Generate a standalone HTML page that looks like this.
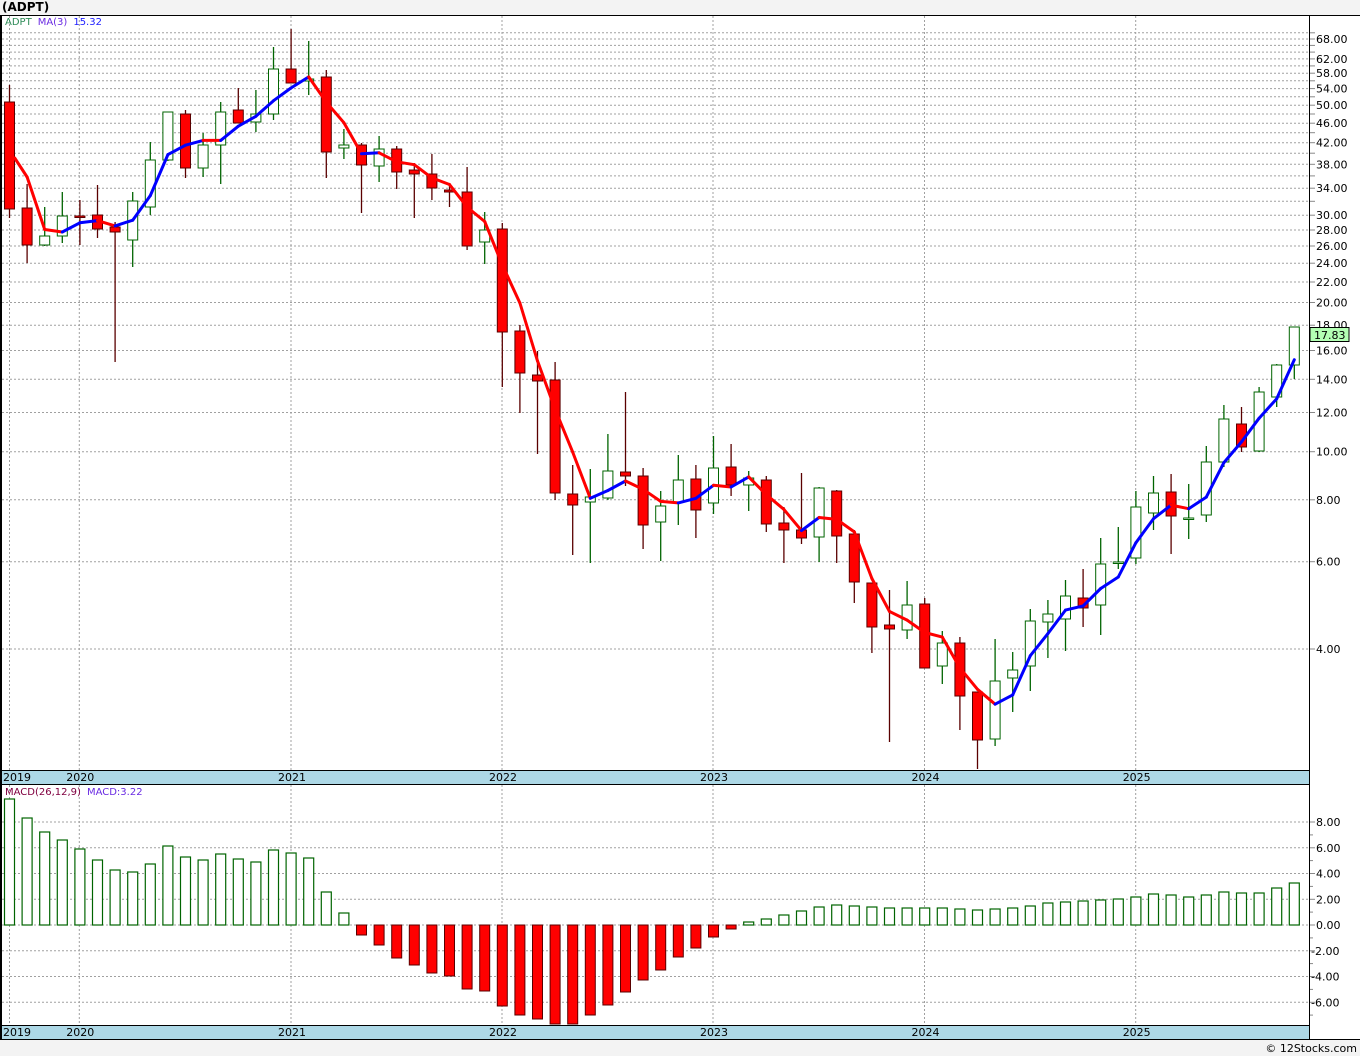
<!DOCTYPE html>
<html><head><meta charset="utf-8"><style>
html,body{margin:0;padding:0;background:#fff;}
svg{display:block;font-family:"DejaVu Sans","Liberation Sans",sans-serif;}
</style></head><body>
<svg id="s" width="1360" height="1056" xmlns="http://www.w3.org/2000/svg">
<rect x="0" y="0" width="1360" height="15" fill="#f3f3f3"/>
<text x="2" y="11" font-size="12" font-weight="bold" fill="#000">(ADPT)</text>
<rect x="0" y="1040" width="1360" height="16" fill="#f3f3f3"/>
<text x="1357" y="1052" font-size="11" text-anchor="end" fill="#000">© 12Stocks.com</text>
<g id="g"></g>
</svg>
<script>
var NS="http://www.w3.org/2000/svg",G=document.getElementById("g"),h="";
function Y(p){return 39+215.3*Math.log(68/p);}
function P(y){return 68*Math.exp(-(y-39)/215.3);}
function X(i){return 9.5+17.6*i;}
// grid main
for(var p=4;p<=70;p+=2){var y=Y(p).toFixed(1);h+='<line x1="2" x2="1309" y1="'+y+'" y2="'+y+'" stroke="#a0a0a0" stroke-dasharray="2,2"/>';h+='<line x1="1309" x2="1315" y1="'+y+'" y2="'+y+'" stroke="#888"/>';}
var labs=[68,62,58,54,50,46,42,38,34,30,28,26,24,22,20,18,16,14,12,10,8,6,4];
labs.forEach(function(p){h+='<text x="1316" y="'+(Y(p)+4).toFixed(1)+'" font-size="11" fill="#000">'+p.toFixed(2)+'</text>';});
var yl=[[9.5,"2019"],[79.3,"2020"],[291,"2021"],[502,"2022"],[713,"2023"],[924.5,"2024"],[1135.7,"2025"]];
yl.forEach(function(a){h+='<line x1="'+a[0]+'" x2="'+a[0]+'" y1="16" y2="770" stroke="#a0a0a0" stroke-dasharray="2,2"/><line x1="'+a[0]+'" x2="'+a[0]+'" y1="785" y2="1025" stroke="#a0a0a0" stroke-dasharray="2,2"/>';});
// macd grid
var mz=925,ms=12.875;
[8,6,4,2,0,-2,-4,-6].forEach(function(v){var y=(mz-v*ms).toFixed(1);h+='<line x1="2" x2="1309" y1="'+y+'" y2="'+y+'" stroke="#a0a0a0" stroke-dasharray="2,2"/><line x1="1309" x2="1315" y1="'+y+'" y2="'+y+'" stroke="#888"/><text x="'+(v<0?1311:1316)+'" y="'+(+y+4)+'" font-size="11">'+v.toFixed(2)+'</text>';});
[7,5,3,1,-1,-3,-5,-7].forEach(function(v){var y=(mz-v*ms).toFixed(1);h+='<line x1="1309" x2="1313" y1="'+y+'" y2="'+y+'" stroke="#888"/>';});
// candles: wt,wb,bt,bb,red
var C=[[85,218,102,209,1],[184,263,208,245,1],[207,246,236,245,0],[192,243,216,236,0],[200,245,216,217,1],[185,238,215,229,1],[222,362,227,232,1],[192,267,201,240,0],[142,215,160,207,0],[112,161,112,160,0],[110,178,114,168,1],[133,177,145,168,0],[102,184,112,145,0],[88,123,110,123,1],[90,132,114,122,0],[47,120,69,114,0],[29,83,69,83,1],[41,95,79,81,0],[70,178,77,152,1],[129,159,145,148,0],[143,213,145,165,1],[136,182,149,166,0],[146,189,149,172,1],[163,218,170,174,1],[154,200,174,188,1],[184,207,190,192,1],[167,250,192,246,1],[212,264,230,242,0],[223,387,229,332,1],[325,413,331,373,1],[351,454,375,381,1],[362,500,380,493,1],[465,555,494,505,1],[469,563,497,502,0],[434,500,471,498,0],[392,486,472,476,1],[468,549,476,525,1],[491,561,506,522,0],[455,525,480,502,0],[465,538,479,510,1],[436,514,468,503,0],[444,496,467,485,1],[471,511,478,485,0],[476,532,480,524,1],[507,563,523,530,1],[473,544,530,538,1],[487,562,488,537,0],[490,563,491,536,1],[530,603,534,582,1],[583,653,583,627,1],[590,742,625,629,1],[581,639,605,630,0],[598,668,604,668,1],[631,684,643,666,0],[637,730,643,696,1],[692,769,692,740,1],[639,746,681,739,0],[652,712,670,678,0],[609,691,621,666,0],[600,658,614,622,0],[580,651,596,619,0],[569,627,598,608,1],[538,635,564,605,0],[527,569,562,563,0],[491,564,507,558,0],[476,530,493,513,0],[474,554,492,516,1],[484,539,518,519,0],[446,522,462,515,0],[405,467,419,462,0],[407,452,424,447,1],[387,452,392,451,0],[364,407,365,397,0],[327,379,327,365,0]];
C.forEach(function(c,i){var x=X(i),r=c[4],wc=r?"#5a0000":"#006400";
h+='<line x1="'+x+'" x2="'+x+'" y1="'+c[0]+'" y2="'+c[1]+'" stroke="'+wc+'" stroke-width="1.3"/>';
var bh=Math.max(c[3]-c[2],1.5);
h+='<rect x="'+(x-5)+'" y="'+c[2]+'" width="10" height="'+bh+'" fill="'+(r?"#ff0000":"#fff")+'" stroke="'+wc+'" stroke-width="1"/>';});
// MA
var cl=C.map(function(c){return c[4]?c[3]:c[2];});
var ma=[158,177];
for(var i=2;i<C.length;i++){var a=(P(cl[i])+P(cl[i-1])+P(cl[i-2]))/3;ma.push(Y(a));}
ma[0]=158;ma[1]=177;
var mx0=14.7;
for(var i=1;i<ma.length;i++){var x1=i==1?mx0:X(i-1),y1=i==1?158:ma[i-1];var col=ma[i]<ma[i-1]?"#0000ff":"#ff0000";
h+='<line x1="'+x1+'" y1="'+y1.toFixed(1)+'" x2="'+X(i)+'" y2="'+ma[i].toFixed(1)+'" stroke="'+col+'" stroke-width="3" stroke-linecap="round"/>';}
// MACD bars
var M=[799,818,832,840,849,860,870,872,864,846,857,860,854,859,862,850,853,858,892,913,935,945,958,965,973,976,989,991,1006,1015,1019,1024,1024,1015,1005,992,980,970,957,948,937,929,922,919,915,911,907,905,906,907,908,908,908,908,909,910,909,908,906,903,902,901,900,899,897,894,895,897,895,892,893,893,888,883];
M.forEach(function(t,i){var x=X(i);if(t<925){h+='<rect x="'+(x-5)+'" y="'+t+'" width="10" height="'+(925-t)+'" fill="#fff" stroke="#006400" stroke-width="1.2"/>';}else{h+='<rect x="'+(x-5)+'" y="925" width="10" height="'+(t-925)+'" fill="#ff0000" stroke="#5a0000" stroke-width="1"/>';}});
// strips
h+='<rect x="0" y="770" width="1309" height="14" fill="#add8e6"/><line x1="0" x2="1309" y1="770.5" y2="770.5" stroke="#000"/><line x1="0" x2="1309" y1="784.5" y2="784.5" stroke="#000"/>';
h+='<rect x="0" y="1025" width="1309" height="15" fill="#add8e6"/><line x1="0" x2="1309" y1="1025.5" y2="1025.5" stroke="#000"/><line x1="0" x2="1360" y1="1039.5" y2="1039.5" stroke="#000"/>';
yl.forEach(function(a,k){var tx=k==0?3:a[0]-13;h+='<text x="'+tx+'" y="781" font-size="11">'+a[1]+'</text><text x="'+tx+'" y="1036" font-size="11">'+a[1]+'</text>';});
// borders
h+='<line x1="0" x2="1360" y1="15.5" y2="15.5" stroke="#000"/><line x1="1309.5" x2="1309.5" y1="15" y2="1040" stroke="#000"/><line x1="1" x2="1" y1="15" y2="1040" stroke="#000" stroke-width="2"/>';
// legends
h+='<text x="5" y="25" font-size="10"><tspan fill="#2e8b57">ADPT</tspan><tspan dx="6" fill="#6a2be2">MA(3)</tspan><tspan dx="6" fill="#2020ff">15.32</tspan></text>';
h+='<text x="5" y="795" font-size="10"><tspan fill="#800040">MACD(26,12,9)</tspan><tspan dx="6" fill="#6a2be2">MACD:3.22</tspan></text>';
// price tag
h+='<rect x="1310" y="327.5" width="39" height="14" fill="#b3ffb3" stroke="#000"/><text x="1314" y="339" font-size="11">17.83</text>';
G.innerHTML=h;
</script>
</body></html>
